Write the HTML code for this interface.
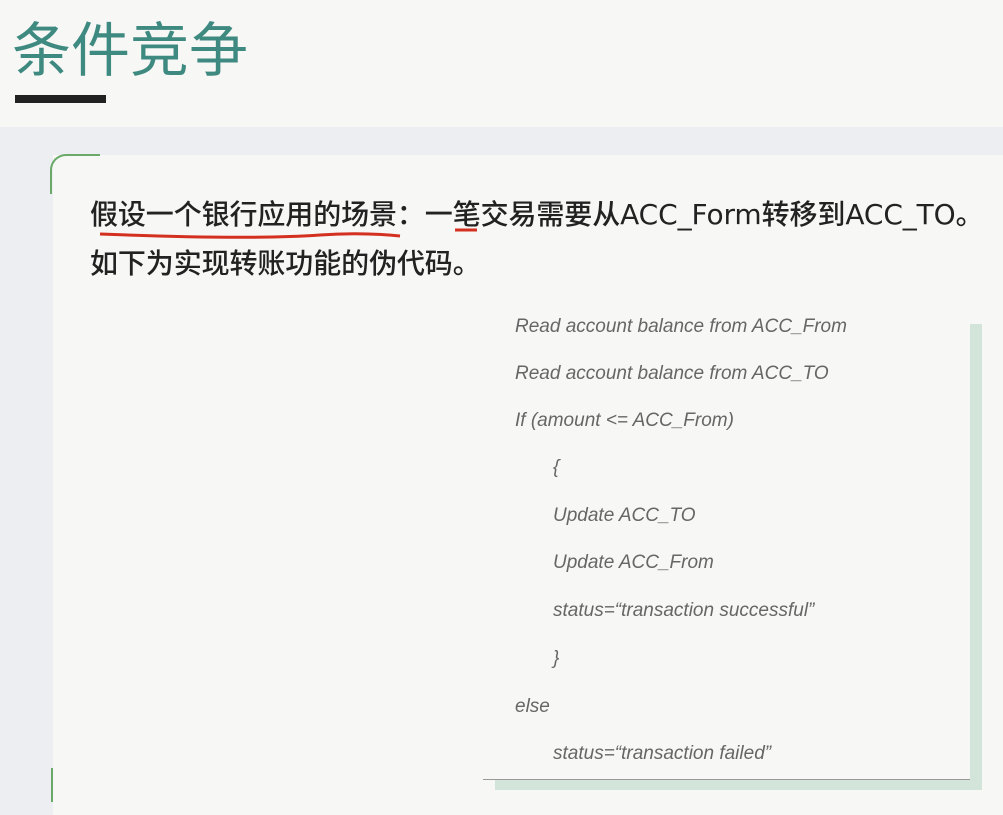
<!DOCTYPE html>
<html><head><meta charset="utf-8"><style>
body{margin:0;width:1003px;height:802px;overflow:hidden;background:#eceef1;position:relative;font-family:"Liberation Sans","Noto Sans CJK SC",sans-serif}
.hdr{position:absolute;left:0;top:0;width:1003px;height:127px;background:#f7f7f6}
.title{position:absolute;left:12px;top:6px;font-size:59px;color:#3f8a80;font-family:"Noto Sans CJK SC",sans-serif;font-weight:400;line-height:80px}
.bar{position:absolute;left:15px;top:95px;width:91px;height:8px;background:#222}
.card{position:absolute;left:53px;top:155px;width:960px;height:660px;background:#f7f7f6}
.arc{position:absolute;left:50px;top:154px;width:48px;height:38px;border-top:2px solid #6aaa68;border-left:2px solid #6aaa68;border-top-left-radius:16px}
.p{position:absolute;left:90px;font-size:28px;color:#222;white-space:nowrap;font-weight:500;font-family:"DejaVu Sans","Noto Sans CJK SC",sans-serif;letter-spacing:-0.1px}
.p span{font-family:"Noto Sans CJK SC",sans-serif}
.shadow{position:absolute;left:495px;top:324px;width:487px;height:466px;background:#d3e4da}
.box{position:absolute;left:483px;top:312px;width:487px;height:467px;background:#f7f7f6;border-bottom:1px solid #999}
.c{position:absolute;font-size:19px;font-style:italic;color:#666;white-space:nowrap}
</style></head><body>
<div class="hdr"></div>
<div class="title">条件竞争</div>
<div class="bar"></div>
<div class="card"></div>
<div class="arc"></div>
<div style="position:absolute;left:51px;top:768px;width:2px;height:34px;background:#6aaa68"></div>
<div class="p" style="top:193px"><span>假设一个银行应用的场景：一笔交易需要从</span>ACC_Form<span>转移到</span>ACC_TO<span>。</span></div>
<div class="p" style="top:242px"><span>如下为实现转账功能的伪代码。</span></div>
<svg style="position:absolute;left:0;top:0" width="1003" height="300"><path d="M100 234 Q250 240 320 235 Q360 232 400 236" stroke="#d4301f" stroke-width="3" fill="none"/><path d="M455 230 L477 230" stroke="#d4301f" stroke-width="3" fill="none"/></svg>
<div class="shadow"></div>
<div class="box"></div>
<div class="c" style="left:515px;top:316px">Read account balance from ACC_From</div>
<div class="c" style="left:515px;top:363px">Read account balance from ACC_TO</div>
<div class="c" style="left:515px;top:410px">If (amount &lt;= ACC_From)</div>
<div class="c" style="left:553px;top:457px">{</div>
<div class="c" style="left:553px;top:505px">Update ACC_TO</div>
<div class="c" style="left:553px;top:552px">Update ACC_From</div>
<div class="c" style="left:553px;top:600px">status=“transaction successful”</div>
<div class="c" style="left:553px;top:648px">}</div>
<div class="c" style="left:515px;top:696px">else</div>
<div class="c" style="left:553px;top:743px">status=“transaction failed”</div>
</body></html>
